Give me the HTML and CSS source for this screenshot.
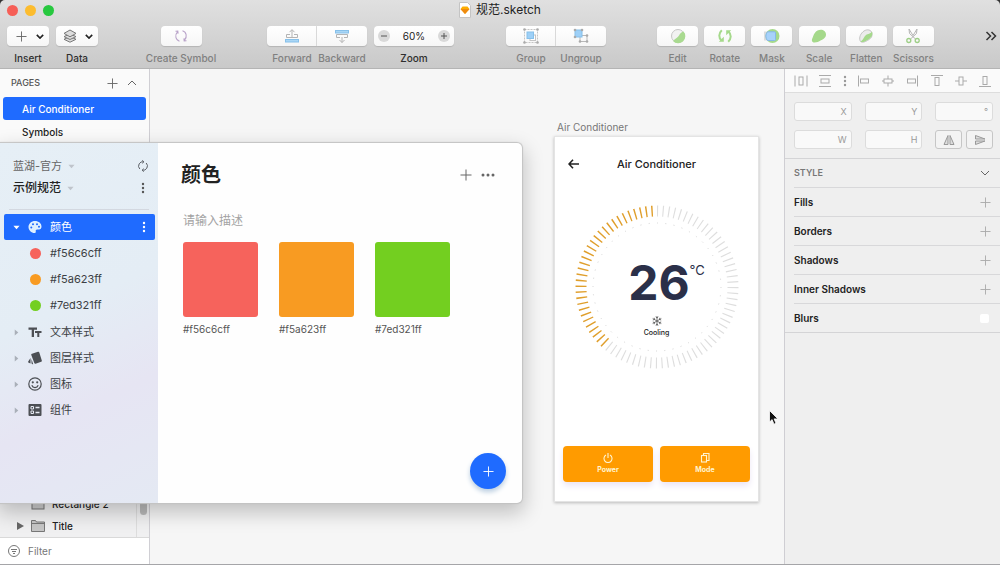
FILE: index.html
```html
<!DOCTYPE html>
<html lang="zh-CN">
<head>
<meta charset="utf-8">
<meta name="viewport" content="width=device-width, initial-scale=1">
<title>规范.sketch</title>
<link rel="stylesheet" href="styles.css">
</head>
<body>
<svg class="defs" aria-hidden="true">
  <symbol id="plus" viewBox="0 0 12 12"><path d="M6 .5v11M.5 6h11"/></symbol>
  <symbol id="down" viewBox="0 0 10 6"><path d="M1 1l4 4 4-4"/></symbol>
  <symbol id="tri-down" viewBox="0 0 8 5"><path d="M.5.5h7L4 4.500z"/></symbol>
  <symbol id="tri-right" viewBox="0 0 5 8"><path d="M.5.500v7L4.500 4z"/></symbol>
  <symbol id="kebab" viewBox="0 0 4 12"><circle cx="2" cy="2" r="1.200"/><circle cx="2" cy="6" r="1.200"/><circle cx="2" cy="10" r="1.200"/></symbol>
</svg>
<div class="app">
  <header class="header">
    <div class="titlebar">
      <div class="lights">
        <button class="light light-close" aria-label="Close"></button>
        <button class="light light-min" aria-label="Minimize"></button>
        <button class="light light-max" aria-label="Zoom window"></button>
      </div>
      <h1 class="doc-title">
        <svg width="12" height="16" viewBox="0 0 12 16"><path d="M.5.500h8l3 3v12H.500z" fill="#fff" stroke="#c4c4c4"/><path d="M3.500 4.500h5l2 2.500L6 12 1.500 7z" fill="#fdad00"/><path d="M1.500 7h9L6 12z" fill="#ee8a10"/></svg>
        <span>规范.sketch</span>
      </h1>
    </div>
    <div class="toolbar">
      <div class="group group-menus">
        <div class="tool">
          <button class="tool-btn split" aria-labelledby="t-insert"><svg class="line" width="11" height="11"><use href="#plus"/></svg><svg class="chev" width="8" height="5"><use href="#down"/></svg></button>
          <span class="tool-label strong" id="t-insert">Insert</span>
        </div>
        <div class="tool">
          <button class="tool-btn split" aria-labelledby="t-data"><svg width="14" height="14" viewBox="0 0 14 14" fill="#ddd" stroke="#777" stroke-linejoin="round"><path d="M7 7.500l6 2.800L7 13.200 1 10.300z"/><path d="M7 4.800l6 2.800L7 10.500 1 7.600z"/><path d="M7 1l6 3.400L7 7.800 1 4.400z"/></svg><svg class="chev" width="8" height="5"><use href="#down"/></svg></button>
          <span class="tool-label strong" id="t-data">Data</span>
        </div>
      </div>
      <div class="tool tool-symbol">
        <button class="tool-btn" aria-labelledby="t-sym"><svg width="14" height="14" viewBox="0 0 14 14" fill="none" stroke="#b9a3c9" stroke-width="1.100"><path d="M5.500 12.200C1.500 11 .5 6 3.500 2.800M1.500 2.300l2.300-.2.300 2.500M8.500 1.800c4 1.200 5 6.200 2 9.400M12.500 11.700l-2.300.2-.3-2.500"/></svg></button>
        <span class="tool-label" id="t-sym">Create Symbol</span>
      </div>
      <div class="group group-zoom">
        <div class="pair">
          <div class="tool"><button class="tool-btn" aria-labelledby="t-fwd"><svg width="16" height="16" viewBox="0 0 16 16" fill="none" stroke="#b4b4b4"><path d="M6 6.500H2.500v3h11v-3H10M8 10V2M5.500 4.200L8 1.600l2.500 2.600"/><rect x="1.500" y="11.500" width="13" height="2.500" fill="#a9d6f5" stroke="#86c0ea"/></svg></button><span class="tool-label" id="t-fwd">Forward</span></div>
          <div class="tool"><button class="tool-btn" aria-labelledby="t-back"><svg width="16" height="16" viewBox="0 0 16 16" fill="none" stroke="#b4b4b4"><rect x="1.500" y="2.500" width="13" height="2.500" fill="#a9d6f5" stroke="#86c0ea"/><path d="M6 9.500H2.500v-3h11v3H10M8 9v5.500M5.500 12L8 14.500l2.500-2.500"/></svg></button><span class="tool-label" id="t-back">Backward</span></div>
        </div>
        <div class="tool">
          <div class="zoom-box">
            <button class="round" aria-label="Zoom out"><svg width="6" height="6" viewBox="0 0 6 6"><path d="M0 3h6"/></svg></button>
            <output aria-labelledby="t-zoom">60%</output>
            <button class="round" aria-label="Zoom in"><svg width="6" height="6" viewBox="0 0 6 6"><path d="M0 3h6M3 0v6"/></svg></button>
          </div>
          <span class="tool-label strong" id="t-zoom">Zoom</span>
        </div>
      </div>
      <div class="pair pair-group">
        <div class="tool"><button class="tool-btn" aria-labelledby="t-group"><svg width="16" height="16" viewBox="0 0 16 16" fill="none" stroke="#c4c4c4"><rect x="1.500" y="1.500" width="13" height="13" stroke-dasharray="2 1"/><rect x="7" y="7" width="5.500" height="5.500" fill="#fff"/><rect x="4" y="4" width="6.500" height="6.500" fill="#9ed0f7" stroke="#86c0ea"/><g fill="#aaa" stroke="none"><circle cx="1.500" cy="1.500" r="1.300"/><circle cx="14.500" cy="1.500" r="1.300"/><circle cx="1.500" cy="14.500" r="1.300"/><circle cx="14.500" cy="14.500" r="1.300"/></g></svg></button><span class="tool-label" id="t-group">Group</span></div>
        <div class="tool"><button class="tool-btn" aria-labelledby="t-ungroup"><svg width="16" height="16" viewBox="0 0 16 16" fill="none" stroke="#b8b8b8"><rect x="7" y="7.500" width="7" height="6"/><rect x="2" y="2" width="7" height="7" fill="#9ed0f7" stroke="#86c0ea"/><g fill="#aaa" stroke="none"><circle cx="2" cy="2" r="1.300"/><circle cx="9" cy="2" r="1.300"/><circle cx="2" cy="9" r="1.300"/><circle cx="14" cy="7.500" r="1.300"/><circle cx="7" cy="13.500" r="1.300"/><circle cx="14" cy="13.500" r="1.300"/></g></svg></button><span class="tool-label" id="t-ungroup">Ungroup</span></div>
      </div>
      <div class="group-edit">
        <div class="tool"><button class="tool-btn" aria-labelledby="t-edit"><svg width="16" height="16" viewBox="0 0 16 16"><circle cx="8" cy="8" r="6.500" fill="#f2f2f2" stroke="#c6c6c6"/><path d="M13.500 3.500A7 7 0 1 1 3 13C5.500 10.500 8 9.500 9 7.500S11.500 4 13.500 3.500z" fill="#a9da90"/></svg></button><span class="tool-label" id="t-edit">Edit</span></div>
        <div class="tool"><button class="tool-btn" aria-labelledby="t-rot"><svg width="16" height="16" viewBox="0 0 16 16" fill="none" stroke="#a5d98b" stroke-width="2"><path d="M4.800 2.300C1.500 5.500 1.500 9.500 4.500 12.500M11.200 13.700c3.300-3.200 3.300-7.200.3-10.200"/><path d="M1.800 13.800h5V8.800zM14.200 2.200h-5v5z" fill="#a5d98b" stroke="none"/></svg></button><span class="tool-label" id="t-rot">Rotate</span></div>
        <div class="tool"><button class="tool-btn" aria-labelledby="t-mask"><svg width="16" height="16" viewBox="0 0 16 16"><rect x="0" y="3.500" width="9" height="9" fill="#ddd"/><circle cx="8.500" cy="8" r="7" fill="#a5d98b"/><path d="M3.500 3.800h7q1 0 1 1v6.700q0 1-1 1h-7a6.500 6.500 0 0 1 0-8.700z" fill="#a7d2fa" stroke="#85b8e8"/></svg></button><span class="tool-label" id="t-mask">Mask</span></div>
        <div class="tool"><button class="tool-btn" aria-labelledby="t-scale"><svg width="16" height="16" viewBox="0 0 16 16"><path d="M6.500 2.500C10 .5 15 2 15 6.500c0 3.500-3 4.800-5 5.800-2.500 1.500-4 2.200-6.500 2.200C.5 14.500.5 12 1.500 10S3 4.500 6.500 2.500z" fill="#a5d98b"/></svg></button><span class="tool-label" id="t-scale">Scale</span></div>
        <div class="tool"><button class="tool-btn" aria-labelledby="t-flat"><svg width="16" height="16" viewBox="0 0 16 16"><path d="M6 3c3-2 7.500-1.500 8 2.500s-2 5.500-4.500 7-6.500 3-7.500 0S2.500 5.300 6 3z" fill="#ececec" stroke="#c4c4c4"/><path d="M14 3.500C15.500 8 12 10.500 9.500 12s-5.500 3-7 1.500C5 12.500 6 8.500 8 7s4.500-1 6-3.500z" fill="#a5d98b"/></svg></button><span class="tool-label" id="t-flat">Flatten</span></div>
        <div class="tool"><button class="tool-btn" aria-labelledby="t-sci"><svg width="16" height="16" viewBox="0 0 16 16" fill="none"><path d="M4 1l.5 4.500 6 5.500M12 1l-.5 4.500-6 5.500M4 1l4 6.500L12 1" stroke="#b5b5b5"/><circle cx="3.800" cy="12.500" r="2" stroke="#9dce86" stroke-width="1.300"/><circle cx="12.200" cy="12.500" r="2" stroke="#9dce86" stroke-width="1.300"/></svg></button><span class="tool-label" id="t-sci">Scissors</span></div>
      </div>
      <button class="overflow" aria-label="More tools"><svg width="12" height="10" viewBox="0 0 12 10"><path d="M1.500 1l4 4-4 4M6.500 1l4 4-4 4"/></svg></button>
    </div>
  </header>

  <main class="main">
    <aside class="layers">
      <div class="pages-head">
        <h2>PAGES</h2>
        <button class="icon-btn" aria-label="Add page"><svg class="line" width="11" height="11"><use href="#plus"/></svg></button>
        <button class="icon-btn" aria-label="Collapse pages"><svg class="line flip" width="10" height="6"><use href="#down"/></svg></button>
      </div>
      <button class="page page-active">Air Conditioner</button>
      <button class="page">Symbols</button>
      <div class="tree">
        <div class="tree-list">
          <div class="tree-row"><span></span><svg width="14" height="12" viewBox="0 0 14 12"><rect x="1" y="1" width="12" height="10" fill="#ccc" stroke="#777"/></svg><span>Rectangle 2</span></div>
          <div class="tree-row"><svg width="7" height="8" viewBox="0 0 7 8"><path d="M0 0l7 4-7 4z" fill="#666"/></svg><svg width="14" height="12" viewBox="0 0 14 12"><path d="M.5 11.500V.500h4l1 1.500h8v9.500zM.5 3.500h13" fill="#c6c6c6" stroke="#777"/></svg><span>Title</span></div>
        </div>
        <div class="track"><div class="thumb"></div></div>
      </div>
      <label class="filter">
        <svg width="12" height="12" viewBox="0 0 12 12" fill="none" stroke="#777"><circle cx="6" cy="6" r="5.500"/><path d="M3 4.500h6M4 6.500h4M5 8.500h2"/></svg>
        <input type="search" placeholder="Filter" aria-label="Filter">
      </label>
    </aside>

    <section class="canvas">
      <div class="artboard-wrap">
        <div class="artboard-name">Air Conditioner</div>
        <div class="artboard">
          <div class="ab-head">
            <svg width="11" height="10" viewBox="0 0 11 10"><path d="M11 5H1M5 .8L1 5l4 4.200"/></svg>
            <h2>Air Conditioner</h2>
          </div>
          <div class="dial">
            <svg class="dial-ring" viewBox="0 0 164 164" fill="none">
              <circle cx="82" cy="82" r="76" pathLength="840" stroke="#dedede" stroke-width="11" stroke-dasharray="2 8"/>
              <path d="M30.300 137.700A76 76 0 0 1 82 6" pathLength="320" stroke="#fff" stroke-width="13"/>
              <path d="M30.300 137.700A76 76 0 0 1 82 6" pathLength="320" stroke="#e09f2c" stroke-width="11" stroke-dasharray="2.500 7.500"/>
              <circle cx="82" cy="82" r="64" pathLength="480" stroke="#d4d4d4" stroke-dasharray="1.200 8.800"/>
            </svg>
            <div class="dial-text">
              <div class="temp"><span>26</span><sup>°C</sup></div>
              <svg width="10" height="10" viewBox="0 0 10 10"><path d="M5 0v10M.7 2.500l8.600 5M.7 7.500l8.600-5M3.700.8L5 2l1.300-1.200M3.700 9.200L5 8l1.300 1.200M.8 4l1.700-.5L2.200 1.800M9.200 6l-1.700.5.3 1.700M.8 6l1.700.5-.3 1.700M9.200 4l-1.700-.5.300-1.700"/></svg>
              <div class="mode">Cooling</div>
            </div>
          </div>
          <div class="ab-actions">
            <button class="ab-btn"><svg width="10" height="10" viewBox="0 0 10 10"><path d="M3 2a4 4 0 1 0 4 0M5 0v5"/></svg>Power</button>
            <button class="ab-btn"><svg width="10" height="10" viewBox="0 0 10 10"><rect x="1.500" y="2.500" width="5" height="6.500"/><path d="M3.500 2.500v-2H9v7H6.500"/></svg>Mode</button>
          </div>
        </div>
      </div>
      <svg class="cursor" width="10" height="16" viewBox="0 0 10 16"><path d="M.5.500v11.500l2.600-2.400 1.900 4.600 2-.9-1.900-4.400h3.800z" fill="#111" stroke="#fff" stroke-width=".8"/></svg>
    </section>

    <aside class="inspector">
      <div class="align">
        <button aria-label="Distribute horizontally"><svg viewBox="0 0 14 12"><path d="M1 .5v11M13 .5v11"/><rect x="5" y="2" width="4" height="8"/></svg></button>
        <button aria-label="Distribute vertically"><svg viewBox="0 0 14 12"><path d="M1 .5h12M1 11.500h12"/><rect x="3" y="4" width="8" height="4"/></svg></button>
        <svg class="dots" width="4" height="12"><use href="#kebab"/></svg>
        <button aria-label="Align left"><svg viewBox="0 0 14 12"><path d="M1.500 .5v11"/><rect x="3.500" y="4" width="8" height="4"/></svg></button>
        <button aria-label="Align center"><svg viewBox="0 0 14 12"><path d="M7 .5v11M1 6h12"/><rect x="3" y="4" width="8" height="4" fill="#fafafa"/></svg></button>
        <button aria-label="Align right"><svg viewBox="0 0 14 12"><path d="M12.500 .5v11"/><rect x="2.500" y="4" width="8" height="4"/></svg></button>
        <button aria-label="Align top"><svg viewBox="0 0 14 12"><path d="M1 .5h12"/><rect x="5" y="2.500" width="4" height="8"/></svg></button>
        <button aria-label="Align middle"><svg viewBox="0 0 14 12"><path d="M1 6h12"/><rect x="5" y="2" width="4" height="8" fill="#fafafa"/></svg></button>
        <button aria-label="Align bottom"><svg viewBox="0 0 14 12"><path d="M1 11.500h12"/><rect x="5" y="1.500" width="4" height="8"/></svg></button>
      </div>
      <div class="fields">
        <label class="field"><input type="text"><span>X</span></label>
        <label class="field"><input type="text"><span>Y</span></label>
        <label class="field"><input type="text"><span>°</span></label>
        <label class="field"><input type="text"><span>W</span></label>
        <label class="field"><input type="text"><span>H</span></label>
        <div class="flips">
          <button aria-label="Flip horizontally"><svg width="12" height="12" viewBox="0 0 12 12"><path d="M5 1.500v9H1zM7 1.500v9h4z"/></svg></button>
          <button aria-label="Flip vertically"><svg width="12" height="12" viewBox="0 0 12 12"><path d="M1.500 5V1.500L11 5zM1.500 7v3.500L11 7z"/></svg></button>
        </div>
      </div>
      <div class="style">
        <div class="style-row style-head"><h2>STYLE</h2><button class="icon-btn" aria-label="Collapse style"><svg class="line" width="10" height="6"><use href="#down"/></svg></button></div>
        <div class="style-row"><h3>Fills</h3><button class="icon-btn add" aria-label="Add fill"><svg width="11" height="11"><use href="#plus"/></svg></button></div>
        <div class="style-row"><h3>Borders</h3><button class="icon-btn add" aria-label="Add border"><svg width="11" height="11"><use href="#plus"/></svg></button></div>
        <div class="style-row"><h3>Shadows</h3><button class="icon-btn add" aria-label="Add shadow"><svg width="11" height="11"><use href="#plus"/></svg></button></div>
        <div class="style-row"><h3>Inner Shadows</h3><button class="icon-btn add" aria-label="Add inner shadow"><svg width="11" height="11"><use href="#plus"/></svg></button></div>
        <div class="style-row"><h3><label for="blurs">Blurs</label></h3><input class="check" id="blurs" type="checkbox"></div>
      </div>
    </aside>

    <section class="plugin">
      <nav class="side">
        <div class="side-head">
          <button class="team">蓝湖-官方<svg width="7" height="5"><use href="#tri-down"/></svg></button>
          <button class="icon-btn" aria-label="Refresh"><svg width="12" height="12" viewBox="0 0 12 12" fill="none" stroke="#5c6066"><path d="M2.800 9A4.300 4.300 0 0 1 6.800 1.800M9.200 3A4.300 4.300 0 0 1 5.200 10.200M5.300.3l1.600 1.500-1.600 1.500M6.700 11.700l-1.600-1.500 1.600-1.500"/></svg></button>
          <button class="project">示例规范<svg width="7" height="5"><use href="#tri-down"/></svg></button>
          <button class="icon-btn kebab" aria-label="Project menu"><svg width="4" height="12"><use href="#kebab"/></svg></button>
        </div>
        <ul class="menu">
          <li class="item item-active"><svg width="7" height="5"><use href="#tri-down"/></svg><svg class="glyph" width="14" height="14" viewBox="0 0 14 14"><path fill="#dff0ff" fill-rule="evenodd" d="M7 1C3.300 1 .5 3.700.5 7s2.800 6 6 6c1 0 1.500-.7 1.300-1.500-.3-1.200.2-2 1.400-2H11c1.500 0 2.500-1.200 2.500-2.800C13.500 3.300 10.700 1 7 1zM3.300 6.500a1 1 0 1 1 0 2 1 1 0 0 1 0-2zM5 3.300a1 1 0 1 1 0 2 1 1 0 0 1 0-2zm4 0a1 1 0 1 1 0 2 1 1 0 0 1 0-2zm2 2.500a1 1 0 1 1 0 2 1 1 0 0 1 0-2z"/></svg><span>颜色</span><svg width="4" height="12"><use href="#kebab"/></svg></li>
          <li class="sub">
            <ul>
              <li class="item"><i class="dot red"></i><span>#f56c6cff</span></li>
              <li class="item"><i class="dot orange"></i><span>#f5a623ff</span></li>
              <li class="item"><i class="dot green"></i><span>#7ed321ff</span></li>
            </ul>
          </li>
          <li class="item"><svg width="5" height="7"><use href="#tri-right"/></svg><svg class="glyph" width="14" height="14" viewBox="0 0 14 14" fill="#4c4f54"><path d="M.5 2.500H9v2.200H6V12H3.700V4.700H.500zM7 6h6.500v2h-2.200v4h-2V8H7z"/></svg><span>文本样式</span></li>
          <li class="item"><svg width="5" height="7"><use href="#tri-right"/></svg><svg class="glyph" width="14" height="14" viewBox="0 0 14 14" fill="#4c4f54"><path d="M4 2.800l6-2q1-.3 1.300.7l2.500 8q.3 1-.7 1.300l-5.500 1.900q-1 .300-1.300-.7L3.300 4q-.3-.9.700-1.200zM2.500 7v5.500L.8 11.800q-.9-.4-.6-1.300zM3.500 8l1.700 5.300q-1.700.2-1.700-1.300z"/></svg><span>图层样式</span></li>
          <li class="item"><svg width="5" height="7"><use href="#tri-right"/></svg><svg class="glyph" width="14" height="14" viewBox="0 0 14 14" fill="none" stroke="#4c4f54" stroke-width="1.200"><circle cx="7" cy="7" r="6.200"/><path d="M3.800 8.300a3.400 3.400 0 0 0 6.400 0"/><circle cx="4.800" cy="5.300" r=".5"/><circle cx="9.200" cy="5.300" r=".5"/></svg><span>图标</span></li>
          <li class="item"><svg width="5" height="7"><use href="#tri-right"/></svg><svg class="glyph" width="14" height="14" viewBox="0 0 14 14"><rect x=".5" y="1" width="13" height="12" rx="1" fill="#4c4f54"/><path d="M3 3.500h2.500V6H3zM3 8h2.500v2.500H3z" fill="none" stroke="#e6eaf2"/><path d="M7.500 4.500h4M7.500 9.500h4" stroke="#e6eaf2" stroke-width="1.500"/></svg><span>组件</span></li>
        </ul>
      </nav>
      <div class="content">
        <div class="content-head">
          <h2>颜色</h2>
          <button class="icon-btn" aria-label="新增颜色"><svg class="line" width="12" height="12"><use href="#plus"/></svg></button>
          <button class="icon-btn" aria-label="更多"><svg width="14" height="4" viewBox="0 0 14 4" fill="#666"><circle cx="2" cy="2" r="1.500"/><circle cx="7" cy="2" r="1.500"/><circle cx="12" cy="2" r="1.500"/></svg></button>
        </div>
        <div class="content-body">
          <input class="desc" type="text" placeholder="请输入描述" aria-label="描述">
          <div class="swatches">
            <figure><div class="swatch red"></div><figcaption>#f56c6cff</figcaption></figure>
            <figure><div class="swatch orange"></div><figcaption>#f5a623ff</figcaption></figure>
            <figure><div class="swatch green"></div><figcaption>#7ed321ff</figcaption></figure>
          </div>
        </div>
        <button class="fab" aria-label="新增"><svg width="11" height="11"><use href="#plus"/></svg></button>
      </div>
    </section>
  </main>
</div>
</body>
</html>
```
FILE: styles.css
```css
* { box-sizing: border-box; }
body {
  margin: 0;
  background: #333;
  color: #222;
  font: 11px/14px Inter, "Noto Sans CJK SC", sans-serif;
}
button, input { font: inherit; color: inherit; margin: 0; }
button { padding: 0; border: 0; background: none; display: flex; align-items: center; justify-content: center; }
input { min-width: 0; padding: 0; border: 0; background: none; outline: 0; }
h1, h2, h3, ul, figure { margin: 0; padding: 0; font: inherit; }
ul { list-style: none; }
svg { flex: none; display: block; }
.defs { position: absolute; width: 0; height: 0; }
.line { fill: none; stroke: #666; }
.flip { transform: rotate(180deg); }
.app { min-height: 100vh; display: flex; flex-direction: column; border-radius: 5px 5px 0 0; overflow: hidden; border-bottom: 1px solid #a5a5a8; }

/* Window header */
.header { background: linear-gradient(#e0e0e0, #c9c9c9); border-bottom: 1px solid #b4b4b4; }
.titlebar { display: grid; grid-template-columns: 1fr auto 1fr; align-items: center; padding: 2px 7px 0; }
.lights { display: flex; gap: 7px; }
.light { width: 11px; height: 11px; border-radius: 50%; }
.light-close { background: #f65f57; }
.light-min { background: #fcbc2e; }
.light-max { background: #27c83f; }
.doc-title { display: flex; align-items: center; gap: 5px; font-size: 12px; line-height: 16px; }
.toolbar { display: flex; align-items: flex-start; gap: 48px; padding: 8px 3px 3px 7px; }
.group, .pair { display: flex; }
.group-menus { gap: 7px; }
.group-zoom { gap: 7px; margin-left: 3px; }
.pair-group { margin-left: 4px; }
.group-edit { display: grid; grid-template-columns: repeat(6, minmax(0, 1fr)); width: 284px; }
.tool { display: flex; flex-direction: column; align-items: center; gap: 5px; }
.tool-btn { width: 41px; height: 20px; border-radius: 4px; background: linear-gradient(#fff, #f6f6f6); box-shadow: 0 1px 1px #b4b4b4; }
.split { width: 42px; justify-content: space-between; padding: 0 5px 0 9px; }
.group-menus .tool:last-child .split { padding-left: 7px; }
.chev { fill: none; stroke: #222; stroke-width: 2; }
.tool-symbol { width: 70px; }
.pair .tool { width: 50px; }
.pair .tool-btn { width: 100%; }
.pair .tool:first-child .tool-btn { border-radius: 4px 0 0 4px; border-right: 1px solid #ddd; }
.pair .tool:last-child .tool-btn { border-radius: 0 4px 4px 0; }
.tool-label { color: #808080; font-size: 10px; font-weight: 500; white-space: nowrap; }
.tool-label.strong { color: #2e2e2e; }
.zoom-box { display: flex; align-items: center; justify-content: space-between; width: 80px; height: 20px; padding: 0 4px; border-radius: 4px; background: linear-gradient(#fff, #f6f6f6); box-shadow: 0 1px 1px #b4b4b4; font-size: 10px; }
.round { width: 12px; height: 12px; border-radius: 50%; background: #d9d9d9; fill: none; stroke: #555; }
.overflow { margin-left: auto; height: 20px; fill: none; stroke: #333; stroke-width: 1.5; }

/* Work area */
.main { position: relative; flex: 1; display: grid; grid-template-columns: 150px 1fr 216px; }
.icon-btn { width: 12px; height: 12px; }
.layers { display: flex; flex-direction: column; border-right: 1px solid #d0cfd4; background: #fafafa; }
.pages-head { display: flex; align-items: center; gap: 8px; padding: 7px 11px; }
.pages-head h2 { margin-right: auto; font-size: 9px; font-weight: 500; color: #555; }
.page { height: 23px; margin: 0 3px; padding-left: 19px; justify-content: flex-start; font-size: 10px; font-weight: 500; border-radius: 3px; }
.page-active { background: #1f6bff; color: #fff; }
.tree { flex: 1; display: flex; background: #f0f0f1; border-bottom: 1px solid #d9d9d9; }
.tree-list { flex: 1; display: flex; flex-direction: column; justify-content: flex-end; border-right: 1px solid #ddd; }
.tree-row { display: grid; grid-template-columns: 7px 14px 1fr; gap: 7px; align-items: center; height: 22px; padding-left: 17px; font-size: 10px; font-weight: 500; }
.track { width: 12px; display: flex; align-items: flex-end; justify-content: center; padding-bottom: 22px; }
.thumb { width: 7px; height: 60px; border-radius: 4px; background: #b9b9b9; }
.filter { display: flex; align-items: center; gap: 8px; height: 26px; padding: 0 8px; background: #fff; }
.filter input { flex: 1; font-size: 10px; }
.filter input::placeholder { color: #777; opacity: 1; }

/* Canvas */
.canvas { position: relative; background: #f6f6f6; }
.artboard-wrap { position: absolute; left: 404px; top: 51px; width: 205px; }
.artboard-name { padding-left: 3px; font-size: 10px; color: #777; }
.artboard { margin-top: 2px; padding: 20px 8px 19px; background: #fff; border: 1px solid #e4e4e4; box-shadow: 0 1px 3px #bbb; }
.ab-head { display: grid; grid-template-columns: 1fr auto 1fr; align-items: center; padding: 0 5px; }
.ab-head svg { fill: none; stroke: #222; stroke-width: 1.6; }
.ab-head h2 { font-size: 11px; font-weight: 500; }
.dial { display: grid; margin: 34px auto 77px; width: 164px; height: 164px; }
.dial-ring, .dial-text { grid-area: 1 / 1; }
.dial-text { display: flex; flex-direction: column; align-items: center; padding-top: 53px; }
.dial-text svg { fill: none; stroke: #555; stroke-width: .8; }
.temp { display: flex; padding-left: 20px; color: #2b3049; line-height: 50px; }
.temp span { font-size: 48px; font-weight: 700; }
.temp sup { font-size: 13px; line-height: 24px; }
.dial-text > svg { margin-top: 8px; }
.mode { font-size: 7px; font-weight: 500; }
.ab-actions { display: grid; grid-template-columns: 1fr 1fr; gap: 7px; }
.ab-btn { flex-direction: column; gap: 1px; height: 36px; border-radius: 4px; background: #ff9b00; color: #fff4d0; font-size: 7px; line-height: 12px; font-weight: 700; box-shadow: 0 4px 6px #ece6f5; }
.ab-btn svg { fill: none; stroke: #fff4d0; stroke-width: 1.1; }
.cursor { position: absolute; left: 619px; top: 341px; }

/* Inspector */
.inspector { border-left: 1px solid #cfced3; background: #efefef; }
.align { display: flex; align-items: center; justify-content: space-between; height: 24px; padding: 0 8px 0 9px; background: #fafafa; border-bottom: 1px solid #ddd; }
.align svg { width: 14px; height: 12px; fill: none; stroke: #aaa; }
.align .dots { width: 4px; fill: #999; stroke: none; }
.fields { display: grid; grid-template-columns: repeat(3, 1fr); gap: 9px 13px; padding: 9px 7px 9px 9px; border-bottom: 1px solid #d4d4d6; }
.field { display: flex; align-items: center; height: 19px; padding: 0 4px; background: #f9f9f9; border: 1px solid #dcdcdc; border-radius: 3px; font-size: 9px; color: #999; }
.field input { flex: 1; width: 0; }
.flips { display: grid; grid-template-columns: 1fr 1fr; gap: 4px; }
.flips button { border: 1px solid #c6c6c6; border-radius: 3px; background: #f3f3f3; fill: #ddd; stroke: #999; }
.style { padding-left: 9px; border-bottom: 1px solid #d4d4d6; }
.style-row { display: flex; align-items: center; justify-content: space-between; height: 29px; padding-right: 9px; }
.style-row.style-head { height: 28px; }
.style-row + .style-row { border-top: 1px solid #d8d8da; }
.style h3 { font-size: 10px; font-weight: 600; }
.style h2 { font-size: 9px; font-weight: 600; color: #777; }
.add { fill: none; stroke: #aaa; }
.check { appearance: none; width: 9px; height: 9px; margin-right: 2px; border-radius: 2px; background: #fff; }

/* Floating plugin window */
.plugin { position: absolute; left: 0; top: 74px; bottom: 61px; width: 522px; display: grid; grid-template-columns: 158px 1fr; background: #fefefe; border-radius: 0 5px 5px 0; overflow: hidden; box-shadow: 0 0 1px 1px #c2c2c2, 0 8px 20px 2px rgba(0, 0, 0, .22); }
.side { padding: 16px 3px 0 4px; background: linear-gradient(155deg, #e6eff6 0, #e4edf5 45%, #e6e5f3 70%, #e4e9f3); }
.side-head { display: grid; grid-template-columns: 1fr 12px; row-gap: 8px; align-items: center; margin: 0 6px 0 5px; padding: 0 0 14px 4px; border-bottom: 1px solid #d3d8e0; }
.team, .project { justify-content: flex-start; gap: 6px; color: #666; }
.project { color: #222; font-size: 12px; font-weight: 500; }
.team svg, .project svg { fill: #bfc4cb; }
.kebab { fill: #555; }
.menu { margin-top: 4px; }
.item { display: grid; grid-template-columns: 8px 14px 1fr 4px; column-gap: 8px; align-items: center; height: 26px; padding: 0 9px 0 8px; font-size: 11px; color: #3c3f44; fill: #a9afb8; }
.item > svg:first-child { justify-self: center; }
.item-active { background: #1f6bff; border-radius: 2px; color: #fff; fill: #fff; }
.sub { padding-bottom: 1px; }
.dot { grid-column: 2; width: 11px; height: 11px; border-radius: 50%; justify-self: center; }
.red { background: #f6635c; }
.orange { background: #f89b22; }
.green { background: #73cf20; }
.content { display: flex; flex-direction: column; padding: 18px 16px 14px 23px; }
.content-head { display: flex; align-items: center; gap: 10px; padding-right: 12px; }
.content-head h2 { margin-right: auto; font-size: 20px; line-height: 28px; font-weight: 600; }
.content-body { padding: 22px 0 0 2px; }
.desc { display: block; width: 100%; height: 18px; font-size: 12px; }
.desc::placeholder { color: #a3a3a3; opacity: 1; }
.swatches { display: flex; gap: 21px; margin-top: 13px; }
.swatch { width: 75px; height: 75px; border-radius: 3px; }
figcaption { margin-top: 5px; font-size: 10px; color: #555; }
.fab { width: 36px; height: 36px; margin: auto 0 0 auto; border-radius: 50%; background: #1f6bff; fill: none; stroke: #fff; box-shadow: 0 3px 5px #b9cde0; }
```
